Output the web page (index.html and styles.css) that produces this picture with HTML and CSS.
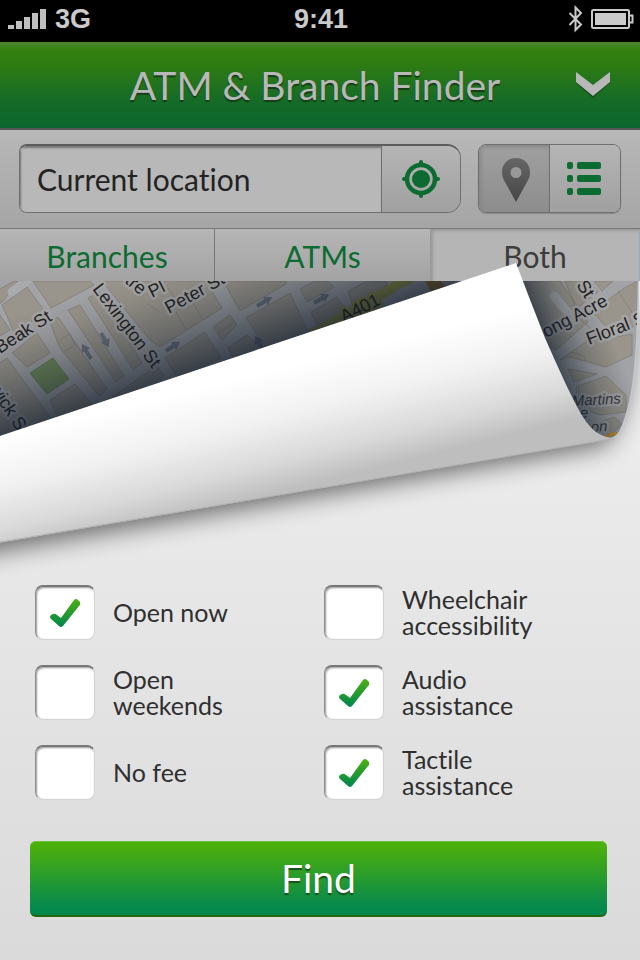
FILE: index.html
```html
<!DOCTYPE html>
<html lang="en">
<head>
<meta charset="utf-8">
<meta name="viewport" content="width=device-width, initial-scale=1">
<title>ATM &amp; Branch Finder</title>
<link rel="stylesheet" href="styles.css">
</head>
<body>
<div class="status">
  <div class="status-left">
    <svg width="40" height="22" viewBox="0 0 40 22" aria-hidden="true" fill="#bfbfbf"><path d="M0 17h6v4H0zM8 13h6v8H8zM16 9h6v12h-6zM24 5h6v16h-6zM32 1h6v20h-6z"/></svg>
    <span>3G</span>
  </div>
  <span>9:41</span>
  <div class="status-right">
    <svg width="16" height="28" viewBox="0 0 16 28" aria-hidden="true"><path d="M1.500 8 13 19.500 7.500 25V2.500L13 8 1.500 20" fill="none" stroke="#cacaca" stroke-width="2"/></svg>
    <svg width="43" height="22" viewBox="0 0 43 22" aria-hidden="true"><rect x="1" y="2" width="37" height="18" rx="1.500" fill="none" stroke="#cacaca" stroke-width="2"/><path d="M4 5h31v12H4z" fill="#cacaca"/><path d="M38 7.500h3.500v7H38" fill="none" stroke="#cacaca" stroke-width="2"/></svg>
  </div>
</div>

<header class="header">
  <h1>ATM &amp; Branch Finder</h1>
  <button class="menu" type="button" aria-label="Menu">
    <svg width="36" height="28" viewBox="0 0 36 28" aria-hidden="true"><path d="M1 4v-1L18 17 35 3v9L18 27 1 12z" fill="#1b3a1b" opacity=".7"/><path d="M1 1 18 14 35 1v10L18 25 1 11z" fill="#b8b8b8"/></svg>
  </button>
</header>

<form class="search">
  <div class="field">
    <input type="text" value="Current location" aria-label="Location">
    <button type="button" class="locate" aria-label="Use current location">
      <svg width="38" height="38" viewBox="0 0 38 38" aria-hidden="true"><g fill="#0b6b30"><circle cx="19" cy="19" r="9"/><path d="M17 2a2 2 0 0 1 4 0v5h-4zM17 31h4v5a2 2 0 0 1-4 0zM2 17h5v4H2a2 2 0 0 1 0-4zM31 17h5a2 2 0 0 1 0 4h-5z"/></g><circle cx="19" cy="19" r="14" fill="none" stroke="#0b6b30" stroke-width="4.500"/></svg>
    </button>
  </div>
  <div class="views">
    <button type="button" class="view view-on" aria-label="Map view" aria-pressed="true">
      <svg width="30" height="44" viewBox="0 0 30 44" aria-hidden="true"><defs><linearGradient id="pin" x2="0" y2="1"><stop stop-color="#666"/><stop offset="1" stop-color="#464646"/></linearGradient></defs><path fill="url(#pin)" fill-rule="evenodd" d="M15 0C7 0 1 6 1 14c0 4 1 7 3 10l11 20 11-20c2-3 3-6 3-10C29 6 23 0 15 0zm0 9a5.500 5.500 0 1 1 0 11 5.500 5.500 0 0 1 0-11z"/></svg>
    </button>
    <button type="button" class="view" aria-label="List view" aria-pressed="false">
      <svg width="34" height="33" viewBox="0 0 34 33" aria-hidden="true" fill="#0b6b30"><rect width="6" height="7" rx="2"/><rect y="13" width="6" height="7" rx="2"/><rect y="26" width="6" height="7" rx="2"/><rect x="10" width="24" height="7" rx="2"/><rect x="10" y="13" width="24" height="7" rx="2"/><rect x="10" y="26" width="24" height="7" rx="2"/></svg>
    </button>
  </div>
</form>

<nav class="tabs">
  <a href="#branches">Branches</a>
  <a href="#atms">ATMs</a>
  <a href="#both" class="tab-on" aria-current="page">Both</a>
</nav>

<svg class="map" viewBox="0 263 640 307" role="img" aria-label="Street map curling up over the filters">
  <defs>
    <clipPath id="sheet"><path d="M0 281H638.500C638 330 636 385 627 412 622 430 618 438 610 438.500L0 543z"/></clipPath>
    <clipPath id="below"><path d="M0 281H640V640H0z"/></clipPath>
    <linearGradient id="foldShade" gradientUnits="userSpaceOnUse" x1="232" y1="358" x2="196" y2="252"><stop stop-color="#0d1828" stop-opacity=".7"/><stop offset=".35" stop-color="#141d2a" stop-opacity=".4"/><stop offset=".75" stop-color="#1c2026" stop-opacity=".1"/><stop offset="1" stop-color="#222" stop-opacity="0"/></linearGradient>
    <linearGradient id="sideShade" gradientUnits="userSpaceOnUse" x1="546" y1="342" x2="604" y2="318"><stop stop-color="#0d1828" stop-opacity=".65"/><stop offset=".5" stop-color="#141d2a" stop-opacity=".25"/><stop offset="1" stop-color="#222" stop-opacity="0"/></linearGradient>
    <linearGradient id="paper" gradientUnits="userSpaceOnUse" x1="103" y1="412" x2="132" y2="529"><stop stop-color="#fff"/><stop offset=".4" stop-color="#f1f1f1"/><stop offset=".75" stop-color="#d9d9d9"/><stop offset="1" stop-color="#bebebe"/></linearGradient>
    <filter id="blur" filterUnits="userSpaceOnUse" x="-80" y="200" width="800" height="460"><feGaussianBlur stdDeviation="13"/></filter>
    <marker id="tip" viewBox="0 0 8 10" refX="2" refY="5" markerWidth="2" markerHeight="2.500" orient="auto"><path d="M0 0 8 5 0 10z" fill="#69727d"/></marker>
  </defs>
  <g clip-path="url(#below)"><path d="M-60 430 516 300 634 310Q630 420 604 445L-60 560z" fill="#000" opacity=".58" filter="url(#blur)"/></g>
  <g clip-path="url(#sheet)">
    <path d="M0 281H640V545H0z" fill="#a2a3a6"/>
    <g fill="#99958c" stroke="#88847d">
      <path d="M-2 290 14 281H18L3 301-2 305zM2 305 27 287 46 313 14 332zM33 281 51 308 94 285 90 281zM-2 312 10 330-2 337zM12 353 37 333 50 353 27 367zM-2 364 7 358 52 420-2 440zM50 400 75 384 92 404 60 422zM50 322 58 317 107 389 99 396 60 348zM68 310 80 305 124 376 116 382zM88 298 100 292 142 363 133 369zM102 281H206L222 308 160 347 150 340zM165 358 205 332 221 358 177 377zM213 327 230 315 237 325 222 340zM112 397 157 366 164 375 155 388zM223 281H286V284L240 311zM246 318 290 293 308 332 268 350zM300 289 315 281H328L334 287 307 302zM311 312 337 297 344 308 318 327zM348 291 367 281H387V285L353 306zM228 348 247 335 262 350 235 362z"/>
      <path d="M176 312 186 330M193 303 203 320M217 334 234 322M60 340 70 334 75 345 65 351M148 304 159 312M168 288 176 300M180 370 187 365" fill="none"/>
      <path d="M510 281H560L588 322 556 350 535 340zM565 281H588L598 292 576 309zM594 281H613L602 291zM626 287 642 279V322L614 336 592 311zM560 360 590 339 615 337 632 334V355L606 367 570 357zM568 369 597 374 574 382zM578 386 606 376 626 395V412L600 415 580 408zM595 424 614 417 622 424 610 436z"/>
      <path d="M570 309 592 330M618 291 633 314M571 352 584 356 586 361M576 385 577 396" fill="none"/>
    </g>
    <path d="M30 373 53 358 69 379 47 394z" fill="#6f8b58" stroke="#687d57"/>
    <path d="M12 292 28 280M554 296 574 320" stroke="#a9aaac" stroke-width="9" stroke-linecap="round"/>
    <path d="M312 334 412 277" stroke="#9c9b42" stroke-width="10"/>
    <path d="M425 281H441L450 292H431z" fill="#9b7423"/>
    <path d="M604 438 612 434 618 434" stroke="#d79b22" stroke-width="3" fill="none"/>
    <g stroke="#69727d" stroke-width="4" fill="none" marker-end="url(#tip)">
      <path d="M91 359 85 349"/><path d="M101 333 106 342"/><path d="M166 351 175 345"/><path d="M257 306 267 300"/><path d="M314 303 324 297"/><path d="M262 348 258 341"/>
    </g>
    <g class="street">
      <text transform="translate(0 354) rotate(-33)">Beak St</text>
      <text transform="translate(92 289) rotate(53)">Lexington St</text>
      <text transform="translate(-11 388) rotate(57)">wick St</text>
      <text transform="translate(124 282) rotate(40)">tre</text>
      <text transform="translate(152 298) rotate(-27)">Pl</text>
      <text transform="translate(169 314) rotate(-29)">Peter St</text>
      <text transform="translate(576 285) rotate(57)">St</text>
      <text transform="translate(546 338) rotate(-28)">ong Acre</text>
      <text transform="translate(589 345) rotate(-21)">Floral St</text>
    </g>
    <text class="road" transform="translate(344 323) rotate(-27)">A401</text>
    <g class="place">
      <text transform="translate(572 406) rotate(-3)">Martins</text>
      <text transform="translate(580 418) rotate(-3)">e</text>
      <text transform="translate(591 432) rotate(-3)">on</text>
    </g>
    <path d="M0 281H464L0 436z" fill="url(#foldShade)"/>
    <path d="M500 281H640V440H500z" fill="url(#sideShade)"/>
  </g>
  <path d="M638.500 281C638 330 636 385 627 412 622 430 618 438 610 438.500" fill="none" stroke="#c3c9d1" stroke-width="1.500"/>
  <path d="M0 436 516 263Q530 300 545 338C556 363 574 403 583 417 592 431 600 437 615 438.500L0 542.500z" fill="url(#paper)"/>
  <path d="M0 542 614 438.500" stroke="#b0b0b0"/>
</svg>

<form class="filters">
  <div class="options">
    <label><input type="checkbox" checked><span>Open now</span></label>
    <label><input type="checkbox"><span>Wheelchair<br>accessibility</span></label>
    <label><input type="checkbox"><span>Open<br>weekends</span></label>
    <label><input type="checkbox" checked><span>Audio<br>assistance</span></label>
    <label><input type="checkbox"><span>No fee</span></label>
    <label><input type="checkbox" checked><span>Tactile<br>assistance</span></label>
  </div>
  <button type="submit" class="find">Find</button>
</form>
</body>
</html>
```
FILE: styles.css
```css
* { box-sizing: border-box; }

body {
  margin: 0;
  min-height: 100vh;
  overflow-x: hidden;
  background: linear-gradient(#ececec 45%, #dadada);
  color: #2f2f2f;
  font-family: Lato, "Liberation Sans", sans-serif;
  font-variant-ligatures: none;
}

button, input { font: inherit; font-variant-ligatures: none; color: inherit; margin: 0; }
svg { display: block; flex: none; }

.status {
  display: grid;
  grid-template-columns: 1fr auto 1fr;
  align-items: center;
  height: 42px;
  padding: 0 6px 4px 8px;
  background: #000;
  color: #cacaca;
  font: bold 27px/38px "Liberation Sans", sans-serif;
}
.status-left, .status-right { display: flex; align-items: center; gap: 7px; }
.status-right { justify-content: flex-end; }

.header {
  display: grid;
  grid-template-columns: 36px 1fr 36px;
  align-items: center;
  height: 88px;
  padding: 0 29px 0 19px;
  border-bottom: 2px solid #555;
  background: linear-gradient(#4e8530, #33800f 10%, #2f7c12 25%, #176c26 65%, #0a662f);
}
.header h1 {
  grid-column: 2;
  margin: 0;
  color: #b8b8b8;
  font-size: 39px;
  font-weight: 400;
  line-height: 48px;
  text-align: center;
  white-space: nowrap;
  text-shadow: 0 2px 1px #173d17;
}
.menu { border: 0; padding: 0; background: none; }

.search {
  display: flex;
  gap: 17px;
  padding: 14px 19px 15px;
  background: linear-gradient(#b8b8b8, #a5a5a5);
  border-bottom: 1px solid #777;
}
.field {
  display: flex;
  flex: 1;
  height: 69px;
  border: 1px solid #6f6f6f;
  border-top: 2px solid #5c5c5c;
  border-radius: 8px 14px 14px 8px;
  overflow: hidden;
}
.field input {
  flex: 1;
  min-width: 0;
  border: 0;
  padding: 0 17px;
  background: #b8b8b8;
  color: #232323;
  font-size: 30px;
  box-shadow: inset 1px 2px 2px #777;
}
.locate {
  display: grid;
  place-items: center;
  width: 79px;
  border: 0;
  border-left: 1px solid #707070;
  padding: 0;
  background: linear-gradient(#b5b5b5, #a0a0a0);
}
.views {
  display: flex;
  width: 143px;
  height: 69px;
  border: 1px solid #6f6f6f;
  border-radius: 8px;
  overflow: hidden;
  box-shadow: 0 1px 1px #888;
}
.view {
  display: grid;
  place-items: center;
  flex: 1;
  border: 0;
  padding: 0 3px 0 0;
  background: linear-gradient(#b5b5b5, #a0a0a0);
}
.view-on {
  border-right: 1px solid #707070;
  padding: 3px 0 0 3px;
  background: linear-gradient(#a0a0a0, #8d8d8d);
  box-shadow: inset 2px 2px 4px #858585;
}

.tabs {
  display: grid;
  grid-template-columns: 215fr 216fr 209fr;
  background: linear-gradient(#b6b6b6, #a3a3a3);
}
.tabs a {
  height: 52px;
  border-right: 1px solid #777;
  color: #0b6b30;
  font-size: 30px;
  line-height: 54px;
  text-align: center;
  text-decoration: none;
}
.tabs a:nth-child(2) { border-right-color: #999; }
.tabs .tab-on {
  border-right-color: #9ab;
  background: #b5b5b5;
  color: #3c3c3c;
  box-shadow: inset 2px 2px 3px #999;
}

.map {
  position: relative;
  width: 100%;
  height: auto;
  margin-top: -18px;
  overflow: visible;
  pointer-events: none;
}
.street, .road, .place { font-family: "Liberation Sans", sans-serif; font-size: 18px; fill: #1f1f1f; }
.street text, .place text { stroke: #a6a6a7; stroke-width: 5px; stroke-linejoin: round; paint-order: stroke; }
.road { stroke: #9c9b42; stroke-width: 5px; paint-order: stroke; }
.place { font-size: 15px; font-style: italic; fill: #3a3a3a; }

.filters { position: relative; padding: 15px 33px 43px 30px; }
.options {
  display: grid;
  grid-template-columns: 289fr 283fr;
  gap: 25px 0;
  padding-left: 5px;
}
.options label {
  display: flex;
  align-items: center;
  gap: 18px;
  height: 55px;
  font-size: 25px;
  line-height: 26px;
  white-space: nowrap;
}
.options span { padding-bottom: 2px; }
.options input {
  appearance: none;
  flex: none;
  width: 60px;
  height: 55px;
  border: 1px solid #d2d2d2;
  border-top: 2px solid #777;
  border-left-color: #8d8d8d;
  border-radius: 8px;
  background: #fff center / 30px 30px no-repeat;
  box-shadow: inset 1px 1px 2px #999;
}
.options input:checked {
  background-image: url("data:image/svg+xml,%3Csvg xmlns='http://www.w3.org/2000/svg' viewBox='0 0 30 30'%3E%3Cdefs%3E%3ClinearGradient id='g' x2='0' y2='1'%3E%3Cstop stop-color='%234bb010'/%3E%3Cstop offset='1' stop-color='%2300864f'/%3E%3C/linearGradient%3E%3C/defs%3E%3Cpath d='M1 21Q-1 19 1 17L3 16Q5 15 7 17L11 20 24 2Q26 0 28 2L30 4Q31 6 29 8L13 28Q11 30 9 28z' fill='url(%23g)'/%3E%3C/svg%3E");
}

.find {
  display: block;
  width: 100%;
  height: 76px;
  margin-top: 41px;
  border: 0;
  border-bottom: 2px solid #22680a;
  border-radius: 6px;
  padding: 0;
  background: linear-gradient(#4cb00c 5%, #3ca71a 25%, #0d8d46 80%, #00864f);
  box-shadow: inset 0 1px #6cc43c;
  color: #fff;
  font-size: 39px;
  line-height: 74px;
  text-shadow: 0 2px 1px #17501d;
}
```
